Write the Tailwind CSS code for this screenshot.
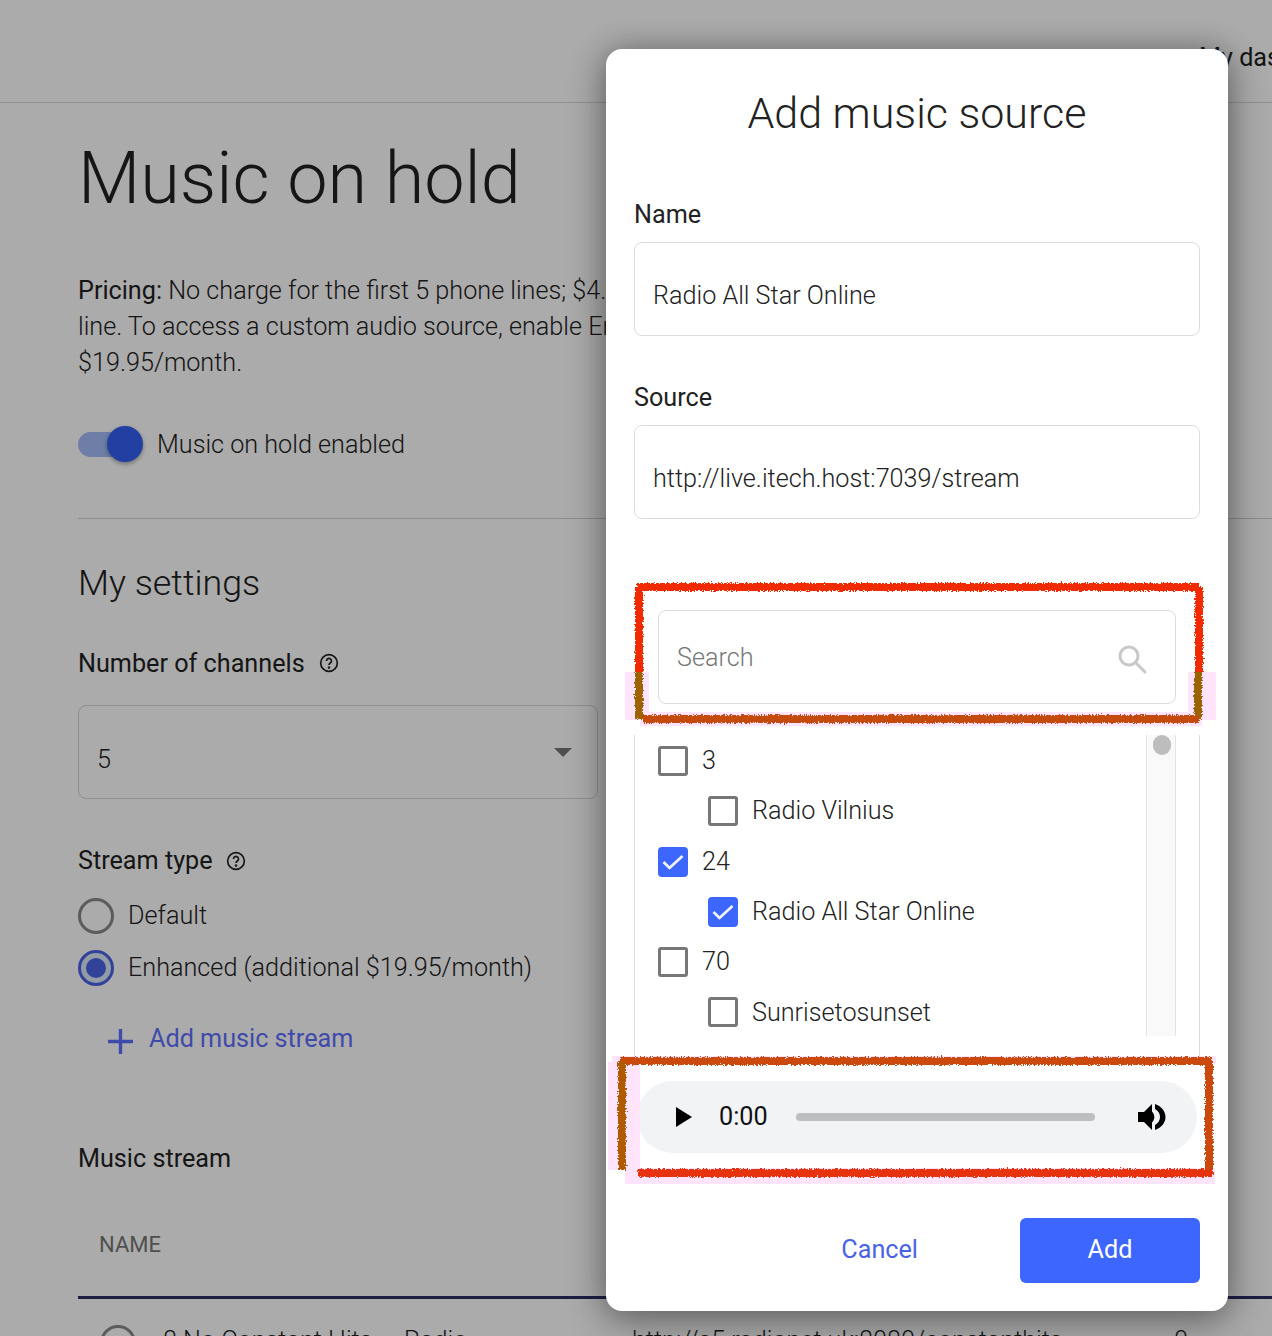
<!DOCTYPE html>
<html lang="en">
<head>
    <meta charset="UTF-8">
    <title>Music on hold</title>
    <script src="https://cdn.jsdelivr.net/npm/@tailwindcss/browser@4"></script>
</head>
<body class="bg-white font-['Roboto',sans-serif] text-[#222] overflow-hidden">
<div class="relative w-[1272px] h-[1336px] overflow-hidden">
    <!-- Page behind the dialog -->
    <header class="h-[103px] border-b border-[#d8d8d8] flex justify-end pt-[40px] pl-[1199px] whitespace-nowrap text-[25.2px] leading-[36px]">
        <span class="block w-full">My dashboard</span>
    </header>
    <main class="pl-[78px] pr-[40px]">
        <h1 class="text-[72px] leading-[84px] font-light mt-[34px]">Music on hold</h1>
        <p class="text-[25.2px] leading-[36px] font-light mt-[52px] w-[1154px] h-[108px]">
            <span class="font-normal">Pricing:</span> No charge for the first 5 phone lines; $4.95/month per additional phone<br>line. To access a custom audio source, enable Enhanced stream type for an additional<br>$19.95/month.
        </p>
        <div class="flex items-center mt-[45px] h-[36px]">
            <div class="relative w-[65px] h-[36px]">
                <div class="absolute left-0 top-[6px] w-[60px] h-[25px] rounded-full bg-[#a4bcf8]"></div>
                <div class="absolute left-[29px] top-0 w-[36px] h-[36px] rounded-full bg-[#3460f0] shadow-[0_2px_4px_rgba(0,0,0,0.35)]"></div>
            </div>
            <span class="ml-[14px] pt-[2px] text-[25.2px] font-light">Music on hold enabled</span>
        </div>
        <div class="border-b border-[#cfcfcf] mt-[38px] h-[19px] -mr-[40px]"></div>
        <h2 class="text-[35.8px] leading-[44px] font-light mt-[42px]">My settings</h2>
        <div class="flex items-center mt-[40px] h-[36px]">
            <span class="pt-[2px] text-[25.2px]">Number of channels</span>
            <svg class="ml-[14px] w-[20px] h-[20px]" viewBox="0 0 24 24" fill="none" stroke="#222" stroke-width="2"><circle cx="12" cy="12" r="10"/><path d="M9 9.5a3 3 0 1 1 4.6 2.5c-1 .7-1.6 1.3-1.6 2.5" /><circle cx="12" cy="17.5" r="0.6" fill="#222"/></svg>
        </div>
        <div class="relative w-[520px] h-[94px] mt-[24px] rounded-lg border border-[#d5d5d5] flex items-center pl-[18px] pt-[15px] text-[25.2px] font-light">
            5
            <div class="absolute right-[25px] top-[42px] w-0 h-0 border-l-[9px] border-r-[9px] border-t-[9px] border-l-transparent border-r-transparent border-t-[#777]"></div>
        </div>
        <div class="flex items-center mt-[44px] h-[36px]">
            <span class="text-[25.2px]">Stream type</span>
            <svg class="ml-[13px] w-[20px] h-[20px]" viewBox="0 0 24 24" fill="none" stroke="#222" stroke-width="2"><circle cx="12" cy="12" r="10"/><path d="M9 9.5a3 3 0 1 1 4.6 2.5c-1 .7-1.6 1.3-1.6 2.5" /><circle cx="12" cy="17.5" r="0.6" fill="#222"/></svg>
        </div>
        <div class="flex items-center mt-[19px] h-[36px]">
            <div class="w-[36px] h-[36px] rounded-full border-[3px] border-[#8a8a8a]"></div>
            <span class="ml-[14px] text-[25.2px] font-light">Default</span>
        </div>
        <div class="flex items-center mt-[16px] h-[36px]">
            <div class="w-[36px] h-[36px] rounded-full border-[3px] border-[#4a63e6] flex items-center justify-center bg-[#dbe9f7]">
                <div class="w-[20px] h-[20px] rounded-full bg-[#4a63e6]"></div>
            </div>
            <span class="ml-[14px] text-[25.2px] font-light">Enhanced (additional $19.95/month)</span>
        </div>
        <div class="flex items-center mt-[35px] ml-[29px] h-[36px] text-[#5f70ff]">
            <svg class="w-[27px] h-[27px] mt-[4px]" viewBox="0 0 27 27" fill="none" stroke="currentColor" stroke-width="3.4"><path d="M13.5 1v25M1 13.5h25"/></svg>
            <span class="ml-[15px] text-[25.2px]">Add music stream</span>
        </div>
        <h3 class="text-[25.2px] leading-[36px] mt-[84px]">Music stream</h3>
        <div class="text-[22px] leading-[30px] text-[#777] mt-[53px] pl-[21px]">NAME</div>
        <div class="h-[3px] bg-[#2d2d66] mt-[36px] -mr-[40px]"></div>
        <div class="relative flex items-center mt-[26px] pl-[22px] whitespace-nowrap text-[25.2px] font-light h-[36px]">
            <div class="w-[36px] h-[36px] rounded-full border-[3px] border-[#8a8a8a]"></div>
            <span class="ml-[27px] -translate-y-[2px]">8 No Constant Hits — Radio</span>
            <span class="absolute left-[554px] -translate-y-[2px]">http://s5.radionet.uk:8080/constanthits</span>
            <span class="absolute left-[1096px] -translate-y-[2px]">0</span>
        </div>
    </main>

    <!-- Backdrop -->
    <div class="absolute inset-0 bg-black/33"></div>

    <!-- Add music source dialog -->
    <div class="absolute left-[606px] top-[49px] w-[622px] h-[1262px] rounded-[16px] bg-white shadow-[0_0_30px_rgba(0,0,0,0.25),0_12px_40px_rgba(0,0,0,0.3)] px-[28px] pt-[38px]">
        <h2 class="text-[43px] leading-[52px] font-light text-center">Add music source</h2>
        <label class="block text-[25.2px] leading-[36px] mt-[58px]">Name</label>
        <div class="h-[94px] mt-[9px] rounded-lg border border-[#dcdcdc] flex items-center pl-[18px] pt-[14px] text-[25.2px] font-light">Radio All Star Online</div>
        <label class="block text-[25.2px] leading-[36px] mt-[44px]">Source</label>
        <div class="h-[94px] mt-[9px] rounded-lg border border-[#dcdcdc] flex items-center pl-[18px] pt-[14px] text-[25.2px] font-light">http://live.itech.host:7039/stream</div>

        <div class="mt-[91px] mx-[24px] h-[94px] rounded-lg border border-[#dcdcdc] flex items-center justify-between pl-[18px] pr-[28px] text-[25.2px] font-light text-[#777]">
            <span class="pt-[2px]">Search</span>
            <svg class="w-[30px] h-[30px] mt-[4px]" viewBox="0 0 30 30" fill="none" stroke="#c8c8c8" stroke-width="3"><circle cx="12" cy="12" r="9"/><path d="M19 19l9 9" stroke-linecap="round"/></svg>
        </div>

        <div class="mt-[31px] h-[325px] border-x border-[#dcdcdc] pl-[23px] flex justify-between pr-[23px]">
            <div class="pt-[11px] text-[25.2px] font-light flex flex-col gap-[20.3px]">
                <div class="flex items-center gap-[14px] h-[30px]"><div class="w-[30px] h-[30px] rounded-[3px] border-[3px] border-[#777]"></div>3</div>
                <div class="flex items-center gap-[14px] h-[30px] ml-[50px]"><div class="w-[30px] h-[30px] rounded-[3px] border-[3px] border-[#777]"></div>Radio Vilnius</div>
                <div class="flex items-center gap-[14px] h-[30px]">
                    <div class="w-[30px] h-[30px] rounded-[4px] bg-[#3d66ff]"><svg class="w-[30px] h-[30px]" viewBox="0 0 30 30" fill="none" stroke="#f0f6ff" stroke-width="2.7"><path d="M5.500 15l6 6L24.500 9"/></svg></div>24
                </div>
                <div class="flex items-center gap-[14px] h-[30px] ml-[50px]">
                    <div class="w-[30px] h-[30px] rounded-[4px] bg-[#3d66ff]"><svg class="w-[30px] h-[30px]" viewBox="0 0 30 30" fill="none" stroke="#f0f6ff" stroke-width="2.7"><path d="M5.500 15l6 6L24.500 9"/></svg></div>Radio All Star Online
                </div>
                <div class="flex items-center gap-[14px] h-[30px]"><div class="w-[30px] h-[30px] rounded-[3px] border-[3px] border-[#777]"></div>70</div>
                <div class="flex items-center gap-[14px] h-[30px] ml-[50px]"><div class="w-[30px] h-[30px] rounded-[3px] border-[3px] border-[#777]"></div>Sunrisetosunset</div>
            </div>
            <div class="w-[30px] h-[301px] bg-[#f9f9f9] border-x border-[#e5e5e5] flex justify-center pl-[2px]">
                <div class="w-[18px] h-[20px] rounded-full bg-[#bdbdbd]"></div>
            </div>
        </div>

        <div class="mt-[21px] mx-[3px] h-[72px] rounded-[36px] bg-[#f1f3f4] flex items-center pl-[38px] pr-[30px]">
            <svg class="w-[18px] h-[22px] shrink-0" viewBox="0 0 18 22" fill="#000"><path d="M1 1l16 10L1 21z"/></svg>
            <span class="ml-[26px] w-[48px] text-[25.2px] text-[#111]">0:00</span>
            <div class="ml-[29px] w-[299px] h-[8px] rounded-full bg-[#bdbec0]"></div>
            <svg class="ml-[42px] w-[30px] h-[30px] shrink-0" viewBox="0 0 30 30" fill="#000"><path d="M1 10h6l8-8v26l-8-8H1z"/><path d="M15 9.500c1.500 1.500 2.300 3.500 2.300 5.500s-.8 4-2.300 5.500z"/><path d="M18 2c6 2 10.500 7 10.500 13S24 26 18 28v-5c3-1.500 5-4.500 5-8s-2-6.500-5-8z"/></svg>
        </div>

        <div class="flex items-center justify-end mt-[65px]">
            <button class="text-[25.2px] text-[#4a63e6] mr-[102px] pb-[2px]">Cancel</button>
            <button class="w-[180px] h-[65px] rounded-md bg-[#3d66ff] text-white text-[25.2px] pb-[2px]">Add</button>
        </div>
    </div>

    <!-- Red hand-drawn annotations -->
    <svg class="absolute inset-0 pointer-events-none" width="1272" height="1336" viewBox="0 0 1272 1336" fill="none">
        <filter id="rough" x="-5%" y="-5%" width="110%" height="110%">
            <feTurbulence type="fractalNoise" baseFrequency="0.7" numOctaves="2" seed="4"/>
            <feDisplacementMap in="SourceGraphic" scale="5"/>
        </filter>
        <g fill="#ffe4fb">
            <rect x="625" y="672" width="24" height="48"/>
            <rect x="1188" y="672" width="28" height="48"/>
            <rect x="640" y="712" width="562" height="14"/>
            <rect x="608" y="1062" width="32" height="108"/>
            <rect x="625" y="1168" width="590" height="16"/>
            <rect x="612" y="1056" width="604" height="8"/>
        </g>
        <g filter="url(#rough)" stroke-width="8">
            <path stroke="#f22c05" d="M637 587H1199M639 587V672M1199 587V672"/>
            <path stroke="#9c6400" d="M639 672V719M1198 672V719"/>
            <path stroke="#c44c08" d="M643 719H1199"/>
            <path stroke="#cc4a08" d="M620 1061H1212M1209 1061V1174"/>
            <path stroke="#b05a00" d="M622 1061V1170"/>
            <path stroke="#e63208" d="M638 1173H1212"/>
        </g>
    </svg>
</div>
</body>
</html>
